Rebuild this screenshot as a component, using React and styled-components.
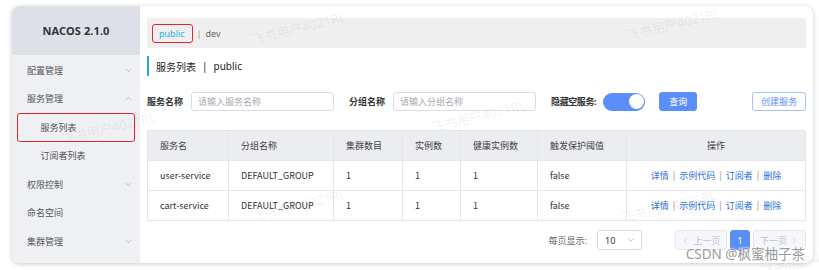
import React from 'react';
import styled, { createGlobalStyle } from 'styled-components';
import { ChevronDown, ChevronUp, ChevronLeft, ChevronRight } from 'lucide-react';

const GlobalStyle = createGlobalStyle`
  html, body { margin: 0; padding: 0; background: #fff; }
  body {
    font-family: "Noto Sans", "Noto Sans CJK SC", sans-serif;
    color: #333;
  }
  * { box-sizing: border-box; }
`;

// 1. 외곽 프레임
const Page = styled.div`
  width: 819px; height: 270px;
  padding: 6px 6px 7px 12px;
  position: relative;
  overflow: hidden;
`;

const Card = styled.div`
  width: 801px; height: 257px;
  display: flex;
  border-radius: 8px;
  overflow: hidden;
  background: #fff;
  box-shadow: 0 1px 5px rgba(0, 0, 0, 0.22);
`;

// 2. 사이드바
const Sidebar = styled.div`
  width: 129px;
  background: #eef0f4;
  display: flex; flex-direction: column;
`;

const Brand = styled.div`
  height: 49px;
  background: #dde1e7;
  display: flex; align-items: center; justify-content: center;
  font-size: 11px; font-weight: 700; color: #333;
  letter-spacing: 0.1px;
`;

const Menu = styled.div`
  padding-top: 1px;
  display: flex; flex-direction: column;
`;

const MenuItem = styled.div`
  height: 28.5px;
  display: flex; align-items: center; justify-content: space-between;
  padding: 0 ${p => (p.$sub ? '1px' : '6px')} 0 ${p => (p.$sub ? '22.5px' : '14px')};
  margin: 0 ${p => (p.$sub ? '5px' : '0')};
  font-size: 9px; color: #555;
  border: 1.5px solid ${p => (p.$active ? '#e3252b' : 'transparent')};
  border-radius: 3px;
  svg { color: #9a9a9a; }
`;

// 3. 메인 영역
const Main = styled.div`
  flex: 1;
  padding: 12px 7px 0 7px;
  display: flex; flex-direction: column;
`;

const NsBar = styled.div`
  height: 30px;
  background: #efefef;
  display: flex; align-items: center;
  padding-left: 5px;
  font-size: 9px; color: #666;
`;

const NsActive = styled.span`
  height: 19px;
  display: inline-flex; align-items: center;
  padding: 0 7px 0 6px;
  border: 1.5px solid #e3252b;
  border-radius: 3px;
  color: #1fb0e6;
`;

const NsSep = styled.span`
  margin: 0 4px 0 4px; color: #999;
`;

const Title = styled.div`
  margin-top: 8px;
  height: 20px;
  display: flex; align-items: center;
  border-left: 2.5px solid #2aa6e0;
  padding-left: 7px;
  font-size: 10px; color: #222;
  span { margin: 0 6px; }
`;

const SearchRow = styled.div`
  margin-top: 16px;
  height: 19px;
  display: flex; align-items: center;
`;

const Label = styled.span`
  font-size: 9px; font-weight: 700; color: #333;
  margin-right: ${p => p.$gap || 8}px;
  letter-spacing: ${p => (p.$tight ? '-0.4px' : '0')};
  white-space: nowrap;
`;

const Input = styled.input`
  width: 143px; height: 19px;
  border: 1px solid #d9dce2; border-radius: 3px;
  padding: 0 6px;
  font-family: inherit; font-size: 9px; color: #333;
  margin-right: 15px;
  &::placeholder { color: #a8abb2; }
`;

const Toggle = styled.div`
  width: 42px; height: 18px;
  border-radius: 9px;
  background: #5b8ef8;
  position: relative;
  margin-right: 14px;
  &::after {
    content: ""; position: absolute; top: 1.5px; right: 1.5px;
    width: 15px; height: 15px; border-radius: 50%; background: #fff;
  }
`;

const Button = styled.button`
  height: 19px;
  padding: 0 ${p => (p.$primary ? '9px' : '8px')};
  border-radius: 3px;
  font-family: inherit; font-size: 9px;
  border: 1px solid ${p => (p.$primary ? '#5b8ef8' : '#a9c0f5')};
  background: ${p => (p.$primary ? '#5b8ef8' : '#fff')};
  color: ${p => (p.$primary ? '#fff' : '#5b8ef8')};
  margin-left: ${p => (p.$right ? 'auto' : '0')};
`;

// 4. 테이블
const Table = styled.table`
  margin-top: 19px;
  width: 658px;
  border-collapse: collapse;
  table-layout: fixed;
  font-size: 9px; color: #333;
  th, td {
    height: 30px; padding: 0 0 0 12px;
    border: 1px solid #e4e6ea;
    text-align: left; font-weight: 400;
  }
  td { font-family: "Noto Sans CJK SC", sans-serif; }
  th { background: #ebedf0; color: #444; }
  th.center, td.center { text-align: center; padding: 0; }
`;

const Link = styled.a`
  color: #2f73d8; text-decoration: none;
`;

const Pipe = styled.span`
  color: #a08a6a; margin: 0 4px;
`;

// 5. 페이지네이션
const Pager = styled.div`
  margin-top: 9px;
  height: 20px;
  display: flex; align-items: center; justify-content: flex-end;
  font-size: 9px; color: #666;
`;

const Select = styled.div`
  width: 45px; height: 20px;
  margin: 0 30px 0 10px;
  border: 1px solid #d9dce2; border-radius: 3px;
  display: flex; align-items: center; justify-content: space-between;
  padding: 0 5px 0 7px;
  color: #333;
  svg { color: #999; }
`;

const PageBtn = styled.div`
  height: 20px;
  width: ${p => p.$w}px;
  margin-left: 3px;
  display: flex; align-items: center; justify-content: center; gap: 3px;
  border-radius: 3px;
  border: 1px solid ${p => (p.$active ? '#5b8ef8' : '#e4e7ed')};
  background: ${p => (p.$active ? '#5b8ef8' : '#f5f7fa')};
  color: ${p => (p.$active ? '#fff' : '#c0c4cc')};
`;

// 6. 워터마크
const Watermark = styled.div`
  position: absolute;
  transform: rotate(-14deg);
  font-size: 13px;
  color: rgba(0, 0, 0, 0.07);
  white-space: nowrap;
  pointer-events: none;
`;

const Csdn = styled.div`
  position: absolute;
  right: 14px; bottom: 7px;
  font-size: 13.5px; color: #9a9a9a;
  text-shadow: 0 0 2px #fff, 0 0 2px #fff;
  white-space: nowrap;
  pointer-events: none;
`;

const menu = [
  { label: '配置管理', icon: 'down' },
  { label: '服务管理', icon: 'up' },
  { label: '服务列表', sub: true, active: true },
  { label: '订阅者列表', sub: true },
  { label: '权限控制', icon: 'down' },
  { label: '命名空间' },
  { label: '集群管理', icon: 'down' },
];

const rows = [
  { name: 'user-service', group: 'DEFAULT_GROUP', cluster: 1, inst: 1, healthy: 1, threshold: 'false' },
  { name: 'cart-service', group: 'DEFAULT_GROUP', cluster: 1, inst: 1, healthy: 1, threshold: 'false' },
];

const marks = [
  { left: 60, top: 118 },
  { left: 250, top: 18 },
  { left: 430, top: 106 },
  { left: 625, top: 14 },
  { left: 250, top: 195 },
  { left: 620, top: 196 },
  { left: 760, top: 250 },
];

function App() {
  return (
    <Page>
      <GlobalStyle />
      <Card>
        <Sidebar>
          <Brand>NACOS 2.1.0</Brand>
          <Menu>
            {menu.map(m => (
              <MenuItem key={m.label} $sub={m.sub} $active={m.active}>
                <span>{m.label}</span>
                {m.icon === 'down' && <ChevronDown size={9} strokeWidth={1.5} />}
                {m.icon === 'up' && <ChevronUp size={9} strokeWidth={1.5} />}
              </MenuItem>
            ))}
          </Menu>
        </Sidebar>

        <Main>
          <NsBar>
            <NsActive>public</NsActive>
            <NsSep>|</NsSep>
            dev
          </NsBar>

          <Title>服务列表<span>|</span>public</Title>

          <SearchRow>
            <Label>服务名称</Label>
            <Input placeholder="请输入服务名称" />
            <Label>分组名称</Label>
            <Input placeholder="请输入分组名称" />
            <Label $gap={7} $tight>隐藏空服务:</Label>
            <Toggle />
            <Button $primary>查询</Button>
            <Button $right>创建服务</Button>
          </SearchRow>

          <Table>
            <colgroup>
              <col style={{ width: 81 }} />
              <col style={{ width: 105 }} />
              <col style={{ width: 69 }} />
              <col style={{ width: 58 }} />
              <col style={{ width: 77 }} />
              <col style={{ width: 89 }} />
              <col style={{ width: 179 }} />
            </colgroup>
            <thead>
              <tr>
                <th>服务名</th>
                <th>分组名称</th>
                <th>集群数目</th>
                <th>实例数</th>
                <th>健康实例数</th>
                <th>触发保护阈值</th>
                <th className="center">操作</th>
              </tr>
            </thead>
            <tbody>
              {rows.map(r => (
                <tr key={r.name}>
                  <td>{r.name}</td>
                  <td>{r.group}</td>
                  <td>{r.cluster}</td>
                  <td>{r.inst}</td>
                  <td>{r.healthy}</td>
                  <td>{r.threshold}</td>
                  <td className="center">
                    <Link>详情</Link><Pipe>|</Pipe>
                    <Link>示例代码</Link><Pipe>|</Pipe>
                    <Link>订阅者</Link><Pipe>|</Pipe>
                    <Link>删除</Link>
                  </td>
                </tr>
              ))}
            </tbody>
          </Table>

          <Pager>
            每页显示:
            <Select>
              10
              <ChevronDown size={10} strokeWidth={1.5} />
            </Select>
            <PageBtn $w={52}><ChevronLeft size={9} strokeWidth={1.5} />上一页</PageBtn>
            <PageBtn $w={20} $active>1</PageBtn>
            <PageBtn $w={53}>下一页<ChevronRight size={9} strokeWidth={1.5} /></PageBtn>
          </Pager>
        </Main>
      </Card>

      {marks.map((m, i) => (
        <Watermark key={i} style={{ left: m.left, top: m.top }}>飞书用户4021RL</Watermark>
      ))}
      <Csdn>CSDN @枫蜜柚子茶</Csdn>
    </Page>
  );
}

export default App;
